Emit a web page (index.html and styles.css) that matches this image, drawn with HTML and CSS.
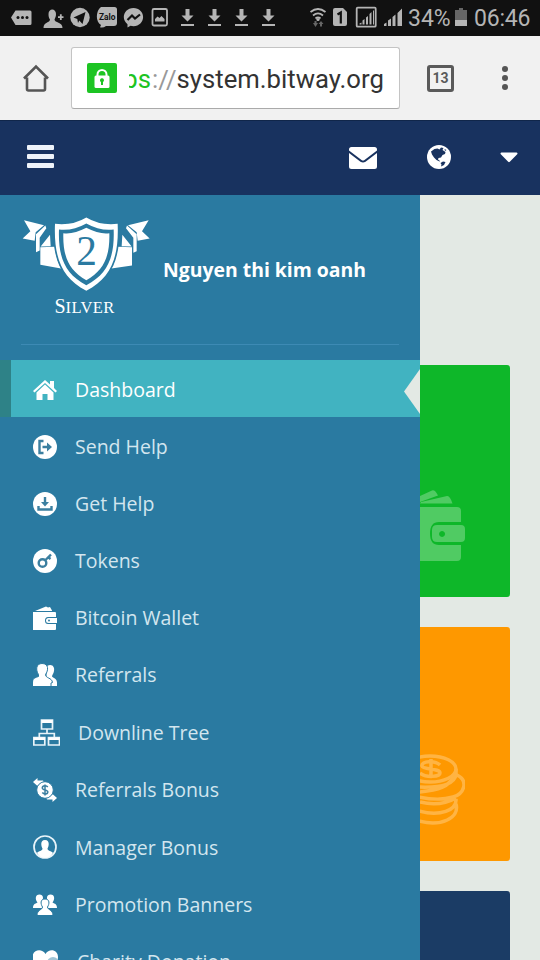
FILE: index.html
```html
<!DOCTYPE html>
<html lang="en">
<head>
<meta charset="utf-8">
<title>Bitway</title>
<link rel="stylesheet" href="styles.css">
</head>
<body>
<div class="screen">
  <div class="status">
    <div class="notices">
      <svg class="slot first" viewBox="0 0 27 36"><path d="M4 17.500 8.500 10.500H23a1.500 1.500 0 0 1 1.500 1.500v11.500a1.500 1.500 0 0 1-1.500 1.500H8.500z"/><g class="hole"><circle cx="11" cy="17.500" r="1.500"/><circle cx="15.500" cy="17.500" r="1.500"/><circle cx="20" cy="17.500" r="1.500"/></g></svg>
      <svg class="slot" viewBox="0 0 27 36"><path d="M8.500 14c0-6 7.500-6 7.500 0 0 3-1 4-1.500 5.500 0 3.500 8 2 8 8.500h-19c0-6.500 6.500-5 6.500-8.500C9 18 8.500 17 8.500 14zM18 16.200h1.900v-2h1.800v2h1.800v1.900h-1.800v2h-1.800v-2H18z"/></svg>
      <svg class="slot" viewBox="0 0 27 36"><circle cx="13" cy="17.500" r="9.700"/><path class="hole" d="M6.500 17.500 18.500 12 15.500 24 12.300 20.500 11 23 10.300 19z"/></svg>
      <svg class="slot" viewBox="0 0 27 36"><path d="M7 7h13.500a2.500 2.500 0 0 1 2.500 2.500v13.500a3 3 0 0 1-3 3H12c-2 1.500-4 1.800-6 1.200l1-2.200C1.500 22 1.500 11 7 7z"/><text class="zalo" x="5" y="20" textLength="16.500" lengthAdjust="spacingAndGlyphs">Zalo</text></svg>
      <svg class="slot" viewBox="0 0 27 36"><path d="M12.500 8c5.500 0 9.600 4 9.600 9s-4 9.200-9.600 9.200c-1 0-2-.1-3-.4l-3 1.700v-3.200C-.5 19 3 8 12.500 8z"/><path d="m6.500 20 4.500-4.500 3 3 5-4" class="bolt"/></svg>
      <svg class="slot" viewBox="0 0 27 36"><rect x="4.500" y="9" width="14.500" height="16.500" rx="1.500" class="line"/><path d="M7 21.500v-2.500l2.500-2.500 2 1.500 2-2 3 3v2.500z"/></svg>
      <svg class="slot" viewBox="0 0 27 36"><path d="M10.500 9h4v6.500h4L12.500 21.500 6.500 15.500h4zM6 24h13v1.900H6z"/></svg>
      <svg class="slot" viewBox="0 0 27 36"><path d="M10.500 9h4v6.500h4L12.500 21.500 6.500 15.500h4zM6 24h13v1.900H6z"/></svg>
      <svg class="slot" viewBox="0 0 27 36"><path d="M10.500 9h4v6.500h4L12.500 21.500 6.500 15.500h4zM6 24h13v1.900H6z"/></svg>
      <svg class="slot" viewBox="0 0 27 36"><path d="M10.500 9h4v6.500h4L12.500 21.500 6.500 15.500h4zM6 24h13v1.900H6z"/></svg>
    </div>
    <svg class="radio" viewBox="0 0 98 36"><g class="line"><path d="M1.500 12q7.500-6 15 0M4 15.500q5-4.300 10 0M6.500 18.500q2.500-2.200 5 0"/></g><circle cx="9" cy="19.500" r="1.600"/><path class="dim" d="M4 23h1.500v-2h2v2H9l-2.500 4zM9.500 24l2.500-3 2.500 3H13v2.500h-2V24z"/><path d="M24 10a2 2 0 0 1 2-2h8l4 4v12a2 2 0 0 1-2 2H26a2 2 0 0 1-2-2z"/><path class="one" d="m28.500 14.500 3.300-2v11"/><rect x="47.700" y="7.700" width="19" height="19" rx="1" class="line"/><path d="M50.500 24.500v-1l2-1v2zM53.500 24.500v-4l2-1.500v5.500zM57 24.500v-7l2-1.500v8.500zM60.500 24.500V14l2-2v12.500zM64 24.500V11l1-1v14.500z"/><path d="M75 26v-2l2.500-1.500V26zM79 26v-5.500l3-2V26zM83.500 26v-9l3-2.500V26zM88.500 26V13l4.500-4.500V26z"/></svg>
    <span class="percent">34%</span>
    <svg class="battery" viewBox="0 0 12 18"><path class="dim" d="M4 0h4v2h4v11H0V2h4z"/><path d="M0 12h12v6H0z"/></svg>
    <span class="clock">06:46</span>
  </div>

  <div class="browser">
    <svg class="home" viewBox="0 0 28 28"><path d="M2 14.500 14 2.500l12 12M5 13.500V25q0 1.500 1.500 1.500h15q1.500 0 1.500-1.500V13.500"/></svg>
    <div class="address">
      <svg class="lock" viewBox="0 0 30 30"><rect width="30" height="30" rx="2"/><path class="shackle" d="M10.500 14v-2.500a4.500 4.500 0 0 1 9 0V14"/><rect class="white" x="7.500" y="12.500" width="15" height="12.500" rx="1.500"/><path d="M13 17.500a2 2 0 1 1 3 1.500V22h-2v-3A2 2 0 0 1 13 17.500z"/></svg>
      <div class="url"><span class="clip"><span class="scheme">ps</span></span><span class="slashes">://</span>system.bitway.org</div>
    </div>
    <div class="tabs">13</div>
    <div class="dots"><i></i><i></i><i></i></div>
  </div>

  <div class="navbar">
    <div class="burger"><i></i><i></i><i></i></div>
    <svg class="mail" viewBox="0 0 28 22"><path d="M2.500 0h23A2.500 2.500 0 0 1 28 2.500v1L15.500 13q-1.500 1-3 0L0 3.500v-1A2.500 2.500 0 0 1 2.500 0zM0 6l11.500 8.700q2.500 1.600 5 0L28 6v13.500a2.500 2.500 0 0 1-2.500 2.500h-23A2.500 2.500 0 0 1 0 19.500z"/></svg>
    <svg class="globe" viewBox="0 0 24 24"><circle cx="12" cy="12" r="12"/><path class="land" d="M4 6.500 7.500 4l3-.5 2 1L14 2.500l2.500.5-1 2 3 2-.5 2-2.500 1-1.500 2.500-2.500.5-.5 1.500 2 1.500-.5.500-3-1.500-2.500-2.500L5 9.500zM13.500 18l2.500-1.500 2.500.5-1.500 3-3 1.500.5-2zM17.500 4l2 1-1.500 1z"/></svg>
    <svg class="caret" viewBox="0 0 18 11"><path d="M1.500.5h15a1 1 0 0 1 .7 1.700l-7.400 7.600a1.200 1.200 0 0 1-1.600 0L.8 2.200A1 1 0 0 1 1.500.5z"/></svg>
  </div>

  <div class="main">
    <div class="sidebar">
      <div class="profile">
        <div class="badge">
          <svg class="shield" viewBox="66 63 387 227"><path d="M72 75 132 90 107 111 104 137 68 130 91 108zM136 91 139 99 119 128 119 166 108 171 108 117zM150 119 152 153 122 154zM121 156 164 155Q168 190 183 220L121 209zM446 75 384 90 410 111 413 137 449 130 426 108zM381 91 378 99 400 128 400 173 410 168 410 117zM367 119 365 153 395 154zM396 156 353 155Q349 190 334 220L396 211z"/><path class="rim" d="M259 67Q300 92 353 86C357 185 334 248 259 287 184 248 161 185 165 86Q218 92 259 67z"/><path class="ring" d="M259 85Q300 108 341 103C344 185 324 236 259 270 194 236 174 185 177 103Q218 108 259 85z"/><path d="M259 98Q298 118 328 114C330 182 312 226 259 255 206 226 188 182 190 114Q220 118 259 98z"/><text x="260" y="209" class="rank">2</text></svg>
          <div class="tier">S<span>ILVER</span></div>
        </div>
        <div class="name">Nguyen thi kim oanh</div>
      </div>
      <div class="menu">
        <div class="item active"><svg class="icon" viewBox="0 0 24 24"><path d="M12 2 17 6.500V3h4v7l3 3-1.500 1.500L12 5 1.500 14.500 0 13z"/><path d="M12 6.500 20.500 14.500v7.500h-6v-6h-5v6h-6v-7.500z"/></svg><span>Dashboard</span></div>
        <div class="item"><svg class="icon" viewBox="0 0 24 24"><circle cx="12" cy="12" r="12"/><path class="cut" d="M10.500 6H6.500v12h4M9.500 12h7"/><path class="fillcut" d="m14 7.500 5 4.500-5 4.500z"/></svg><span>Send Help</span></div>
        <div class="item"><svg class="icon" viewBox="0 0 24 24"><circle cx="12" cy="12" r="12"/><path class="cut" d="M5.500 14v3.500h13V14M12 5v6"/><path class="fillcut" d="M8 10h8l-4 4.500z"/></svg><span>Get Help</span></div>
        <div class="item"><svg class="icon" viewBox="0 0 24 24"><circle cx="12" cy="12" r="12"/><circle class="cut" cx="9.500" cy="14" r="3.800"/><path class="cut" d="m12.500 11 5.500-5.500M15 8l2.500 2"/></svg><span>Tokens</span></div>
        <div class="item"><svg class="icon" viewBox="0 0 24 24"><path d="M2 5 13 .5l2 1L17 1l2 3.500V5zM0 6h22q1 0 1 1v4h-8q-3 0-3 3.500t3 3.500h8v5q0 1-1 1H0z"/><path d="M15.500 12H24v5h-8.500q-2.500 0-2.500-2.500T15.500 12z"/><circle class="fillcut" cx="16" cy="14.500" r="1"/></svg><span>Bitcoin Wallet</span></div>
        <div class="item"><svg class="icon" viewBox="0 0 24 24"><path d="M14 3c5-3 8 1 7 5-.5 3-2 4-2 5.500 1 1.500 5 2 5 6V23H13z"/><path class="outlined" d="M9 .5c7 0 6.500 7 3.500 11 0 4 6.500 3 7 8L18 20v3.500H-.5c0-7-.5-8 6-10V11.500C2.500 7 3 .5 9 .5z"/></svg><span>Referrals</span></div>
        <div class="item tree"><svg class="icon" viewBox="0 0 27 27"><path class="stroke" d="M8.500 1h11v9h-11zM.8 18.500h11v7.500h-11zM15.500 18.500h11v7.500h-11zM14 10v4.500M6.300 18v-3.500h15V18"/><path d="M8.500 1h11v3h-11zM1 18.500h11v2.500H1zM15.500 18.500h11v2.500h-11z"/></svg><span>Downline Tree</span></div>
        <div class="item"><svg class="icon" viewBox="0 0 24 24"><path d="M0 4 4.500 0v2.500H10l1 2-5 5-1.500-2.500V8zM24 20l-4.500 4v-2.500H14l-1-2 5-5 1.500 2.500V16z"/><circle class="outlined" cx="12" cy="12" r="8.300"/><path class="cut thin" d="M14.800 9c-1.500-2-5.500-1.500-5.500 1s5.500 1.500 5.500 4-4 2.500-5.500.5M12 6.500v11"/></svg><span>Referrals Bonus</span></div>
        <div class="item tall"><svg class="icon" viewBox="0 0 24 24"><circle class="stroke" cx="12" cy="12" r="11"/><path d="M12 5c5 0 4 6 2.500 8.500 0 3 4 2 5.500 4.500-4 6.500-12 6.500-16 0 1.500-2.500 5.500-1.500 5.500-4.500C8 11 7 5 12 5z"/></svg><span>Manager Bonus</span></div>
        <div class="item"><svg class="icon" viewBox="0 0 24 24"><path d="M6.500 1.500c4 0 4.500 4.500 2 7 0 2 1 2 1 6.500H0c0-4 2-4 4.500-5.500C2 6.500 2 1.500 6.500 1.500zM17.500 1.500c-4 0-4.500 4.500-2 7 0 2-1 2-1 6.500H24c0-4-2-4-4.500-5.500C22 6.500 22 1.500 17.500 1.500z"/><path class="outlined" d="M12 6c5 0 4.500 5 2.500 8 0 3 5.500 2.500 5.500 8.500H4c0-6 5.500-5.500 5.500-8.500C7.500 11 7 6 12 6z"/></svg><span>Promotion Banners</span></div>
        <div class="item charity"><svg class="icon" viewBox="0 0 25 24"><path d="M12.500 23C5 17-.5 13-.5 7-.5-.5 9-2 12.500 4 16-2 25-.5 25 7c0 6-5 10-12.500 16z"/><circle cx="20" cy="13" r="6" class="coin"/></svg><span>Charity Donation</span></div>
      </div>
    </div>
    <div class="content">
      <div class="card green"><svg viewBox="0 0 45 71"><path d="M0 6 12 .5q3-1 6 5L0 12zM1 12 27 6q3-.5 5.500 7.500H0zM0 17h37q4 0 4 4v11H19q-9 0-9 11.500T19 55h22v12q0 4-4 4H0z"/><path fill-rule="evenodd" d="M17 35h24q4 0 4 4v9q0 4-4 4H17q-5 0-5-5v-7q0-5 5-5zM22 41a3 3 0 1 0 .1 0z"/></svg></div>
      <div class="card orange"><svg viewBox="0 0 45 71"><ellipse cx="10" cy="15" rx="26" ry="13"/><path d="M36 15v6C34 31 20 34-2 33M37 21c12 6 7 19-4 22-10 3-20 3-34 0M33 22c-3 11-15 14-34 16M36 45c1 11-16 18-37 12M36 50c4 14-15 23-37 17M0 48q20 5 36-4"/><path d="M20 11C15 6 1 7 2 12c1 4 18 2 18 7 0 4-14 5-20 0M11 5v17"/></svg></div>
      <div class="card navy"></div>
    </div>
  </div>
</div>
</body>
</html>
```

FILE: styles.css
```css
* { box-sizing: border-box; }
body { margin: 0; background: #e3e9e4; }
svg { display: block; flex: none; }
.screen { width: 540px; height: 960px; overflow: hidden; display: flex; flex-direction: column; }

.status { height: 36px; flex: none; background: #111; display: flex; align-items: center; color: #b5b5b5; font-family: Roboto, sans-serif; }
.status svg { fill: #b5b5b5; }
.notices { display: flex; width: 309px; padding-left: 7px; }
.slot { width: 27px; height: 36px; }
.slot.first { margin-right: 5.500px; }
.status .hole, .status .zalo { fill: #111; }
.zalo { font: bold 8.500px Roboto, sans-serif; }
.bolt, .one { fill: none; stroke: #111; stroke-width: 2.200; }
.status .line { fill: none; stroke: #b5b5b5; stroke-width: 1.800; }
.status .dim { fill: #666; }
.radio { width: 98px; height: 36px; }
.percent { width: 48px; padding-left: 1px; font-size: 23px; }
.battery { width: 12px; height: 18px; margin-top: -2px; }
.clock { margin-left: 7px; font-size: 23px; letter-spacing: -0.200px; }

.browser { height: 84px; flex: none; background: #f1f1f1; display: flex; align-items: center; padding-left: 22px; }
.home { width: 28px; height: 28px; fill: none; stroke: #555; stroke-width: 2.600; }
.address { width: 329px; height: 62px; margin-left: 21px; padding-left: 15px; background: #fff; border: 1px solid #c4c4c4; border-bottom-color: #aaa; border-radius: 3px; display: flex; align-items: center; }
.lock { width: 30px; height: 30px; fill: #1dc423; }
.lock .white { fill: #fff; }
.shackle { fill: none; stroke: #fff; stroke-width: 2; }
.url { margin: 2px 0 0 12px; font: 25.700px/36px Roboto, sans-serif; color: #333; display: flex; white-space: nowrap; }
.clip { width: 22px; margin-right: 1px; overflow: hidden; display: flex; justify-content: flex-end; }
.scheme { color: #1dc423; }
.slashes { color: #999; }
.tabs { width: 27px; height: 27px; margin-left: 27px; border: 3px solid #5a5a5a; border-radius: 3px; font: bold 14px/21px Roboto, sans-serif; color: #5a5a5a; text-align: center; }
.dots { margin-left: 48px; display: grid; gap: 3px; }
.dots i { width: 6px; height: 6px; border-radius: 50%; background: #555; }

.navbar { height: 75px; flex: none; background: #18325f; border-top: 1px solid #10264a; display: flex; align-items: center; padding-left: 27px; }
.navbar svg { fill: #fff; }
.burger { display: grid; gap: 4px; width: 27px; margin-top: -3px; }
.burger i { height: 5px; background: #eef3fa; border-radius: 1px; }
.mail { width: 28px; height: 22px; margin-left: 295px; }
.globe { width: 24px; height: 24px; margin-left: 50px; margin-top: -2px; }
.navbar .land { fill: #18325f; }
.caret { width: 18px; height: 11px; margin-left: 49px; margin-top: -2px; }

.main { flex: 1; display: flex; min-height: 0; }
.sidebar { width: 420px; flex: none; background: #2a7aa1; overflow: hidden; font-family: "Open Sans", sans-serif; }
.profile { height: 150px; margin: 0 21px; border-bottom: 1px solid #3d8ab4; display: flex; }
.badge { width: 129px; margin-left: 1px; padding-top: 21px; }
.shield { width: 129px; height: 76px; fill: #fff; }
.shield .rim { stroke: #2a7aa1; stroke-width: 10; paint-order: stroke; }
.shield .ring, .shield .rank { fill: #2a7aa1; }
.rank { font: 124px "Liberation Serif", serif; text-anchor: middle; }
.tier { width: 125px; margin-top: 2px; font: 20px/24px "Liberation Serif", serif; color: #fff; text-align: center; }
.tier span { font-size: 16.500px; letter-spacing: 0.400px; }
.name { margin: 62px 0 0 12px; font-size: 19.400px; line-height: 26px; font-weight: 700; color: #fff; white-space: nowrap; }
.menu { padding-top: 15px; }
.item { height: 57px; padding: 2px 0 0 33px; display: flex; align-items: center; color: #d3e6ef; font-size: 19.500px; white-space: nowrap; }
.item.active { position: relative; background: #41b3c1; border-left: 11px solid #2e8287; padding-left: 22px; color: #fff; }
.item.active::after { content: ""; position: absolute; right: 0; top: 9px; width: 16px; height: 45px; background: #e3e9e4; clip-path: polygon(100% 0, 0 50%, 100% 100%); }
.item.tree, .item.tall { height: 58px; }
.icon { width: 24px; height: 24px; margin-right: 18px; fill: #fff; }
.item.tree .icon { width: 27px; height: 27px; }
.charity .icon { width: 25px; margin-right: 19px; }
.cut { fill: none; stroke: #3b7fa0; stroke-width: 2.400; }
.cut.thin { stroke-width: 1.500; }
.fillcut { fill: #3b7fa0; }
.stroke { fill: none; stroke: #e9f4f9; stroke-width: 1.700; }
.outlined { stroke: #2a7aa1; stroke-width: 1; }
.coin { fill: #9fc4d5; }

.content { width: 90px; padding-top: 170px; overflow: hidden; }
.card { height: 233px; margin-bottom: 30px; border-radius: 0 3px 3px 0; padding-top: 125px; }
.card svg { width: 45px; height: 71px; }
.green { background: #0eb729; height: 232px; }
.green svg { fill: #50cb63; }
.orange { background: #fe9800; height: 234px; padding-top: 127px; }
.orange svg { fill: none; stroke: #ffb443; stroke-width: 3.500; }
.navy { background: #1b3c65; }
```
